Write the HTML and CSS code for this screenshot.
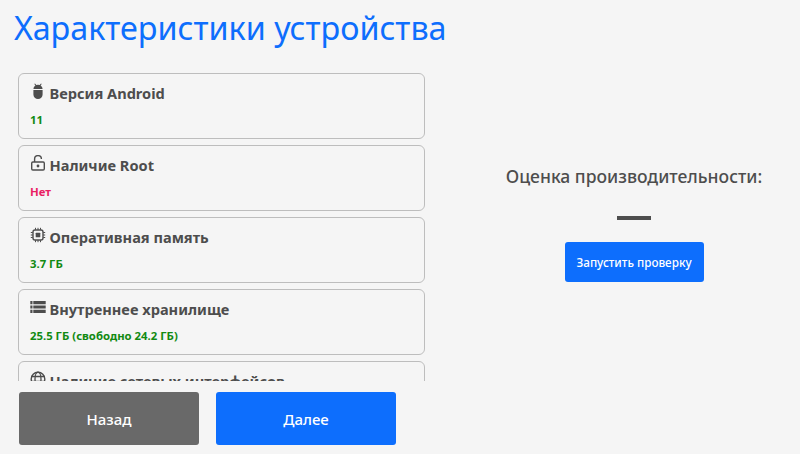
FILE: index.html
```html
<!DOCTYPE html>
<html lang="ru">
<head>
  <meta charset="UTF-8">
  <meta name="viewport" content="width=device-width, initial-scale=1.0">
  <title>Характеристики устройства</title>
  <link rel="stylesheet" href="styles.css">
</head>
<body>
  <div class="page">
    <h1 class="page-title">Характеристики устройства</h1>
    <div class="content">
      <div class="spec-list">
        <div class="spec-card">
          <div class="spec-name">
            <svg class="spec-icon" viewBox="0 0 16 16"><path d="M5 0.4l1.3 1.7a4.4 4.4 0 0 1 3.4 0L11 0.4l0.7 0.5-1.1 1.7A4 4 0 0 1 12.6 6H3.4A4 4 0 0 1 5.4 2.6L4.3 0.9z"/><path d="M3.4 7h9.2v4.4a4.6 4.6 0 0 1-9.2 0z"/></svg>
            Версия Android
          </div>
          <div class="spec-value good">11</div>
        </div>
        <div class="spec-card">
          <div class="spec-name">
            <svg class="spec-icon" viewBox="0 0 16 16"><path fill="none" stroke="#4d4d4d" stroke-width="1.4" d="M4.6 7V4a3.4 3.4 0 0 1 6.8 0"/><rect x="1.7" y="7" width="12.6" height="8" rx="1.2" fill="none" stroke="#4d4d4d" stroke-width="1.4"/><circle cx="8" cy="11" r="1.4"/></svg>
            Наличие Root
          </div>
          <div class="spec-value bad">Нет</div>
        </div>
        <div class="spec-card">
          <div class="spec-name">
            <svg class="spec-icon" viewBox="0 0 16 16"><rect x="3" y="3" width="10" height="10" rx="2" fill="none" stroke="#4d4d4d" stroke-width="1.4"/><rect x="5.7" y="5.7" width="4.6" height="4.6" rx="0.6"/><path fill="none" stroke="#4d4d4d" stroke-width="1" d="M5.5 0.8v2M8 0.8v2M10.5 0.8v2M5.5 13.2v2M8 13.2v2M10.5 13.2v2M0.8 5.5h2M0.8 8h2M0.8 10.5h2M13.2 5.5h2M13.2 8h2M13.2 10.5h2"/></svg>
            Оперативная память
          </div>
          <div class="spec-value good">3.7 ГБ</div>
        </div>
        <div class="spec-card">
          <div class="spec-name">
            <svg class="spec-icon" viewBox="0 0 16 16"><path d="M0.3 2h2.2v3.2H0.3zM3.3 2h12.4v3.2H3.3zM0.3 6.4h2.2v3.2H0.3zM3.3 6.4h12.4v3.2H3.3zM0.3 10.8h2.2V14H0.3zM3.3 10.8h12.4V14H3.3z"/></svg>
            Внутреннее хранилище
          </div>
          <div class="spec-value good">25.5 ГБ (свободно 24.2 ГБ)</div>
        </div>
        <div class="spec-card">
          <div class="spec-name">
            <svg class="spec-icon" viewBox="0 0 16 16"><circle cx="8" cy="8" r="6.8" fill="none" stroke="#4d4d4d" stroke-width="1.4"/><ellipse cx="8" cy="8" rx="3" ry="6.8" fill="none" stroke="#4d4d4d" stroke-width="1.3"/><path fill="none" stroke="#4d4d4d" stroke-width="1.3" d="M1.2 5.5h13.6M1.2 10.5h13.6"/></svg>
            Наличие сетевых интерфейсов
          </div>
          <div class="spec-value good">Да</div>
        </div>
      </div>
      <div class="score-panel">
        <div class="score-title">Оценка производительности:</div>
        <div class="score-dash"></div>
        <button class="btn btn-blue btn-small">Запустить проверку</button>
      </div>
    </div>
    <div class="footer">
      <button class="btn btn-gray btn-big">Назад</button>
      <button class="btn btn-blue btn-big">Далее</button>
    </div>
  </div>
</body>
</html>
```

FILE: styles.css
```css
body {
  margin: 0;
  background-color: #f5f5f5;
  font-family: "Noto Sans", "Open Sans", sans-serif;
  color: #4d4d4d;
}
.page {
  display: flex;
  flex-direction: column;
  height: 454px;
  overflow: hidden;
}
.page-title {
  margin: 0;
  padding: 5px 0 0 14px;
  height: 73px;
  box-sizing: border-box;
  font-size: 32.3px;
  line-height: 44px;
  font-weight: 400;
  color: #0d6efd;
}
.content {
  display: flex;
  height: 308px;
}
.spec-list {
  width: 407px;
  margin-left: 18px;
  overflow: hidden;
  display: flex;
  flex-direction: column;
  gap: 6px;
}
.spec-card {
  flex: none;
  height: 66px;
  box-sizing: border-box;
  padding: 8px 11px;
  border: 1px solid #bdbdbd;
  border-radius: 6px;
}
.spec-name {
  display: flex;
  align-items: center;
  gap: 3.5px;
  font-size: 14.6px;
  line-height: 22px;
  font-weight: 700;
}
.spec-icon {
  width: 16px;
  height: 16px;
  margin-top: -4px;
  fill: #4d4d4d;
}
.spec-value {
  margin-top: 8px;
  font-size: 11.35px;
  line-height: 16px;
  font-weight: 700;
}
.good {
  color: #128a12;
}
.bad {
  color: #e91e63;
}
.score-panel {
  width: 332px;
  margin-left: 43px;
  padding-bottom: 9px;
  box-sizing: border-box;
  display: flex;
  flex-direction: column;
  align-items: center;
  justify-content: center;
}
.score-title {
  font-size: 17.55px;
  line-height: 24px;
  font-weight: 500;
}
.score-dash {
  width: 34px;
  height: 4px;
  margin-top: 28px;
  background-color: #4d4d4d;
}
.btn {
  border: none;
  border-radius: 3px;
  color: #fff;
  font-family: inherit;
  font-weight: 500;
}
.btn-blue {
  background-color: #0d6efd;
}
.btn-gray {
  background-color: #696969;
}
.btn-small {
  width: 139px;
  height: 40px;
  margin-top: 22px;
  font-size: 11.7px;
}
.footer {
  display: flex;
  gap: 17px;
  padding: 11px 0 0 19px;
}
.btn-big {
  width: 180px;
  height: 53px;
  font-size: 15px;
}
```
